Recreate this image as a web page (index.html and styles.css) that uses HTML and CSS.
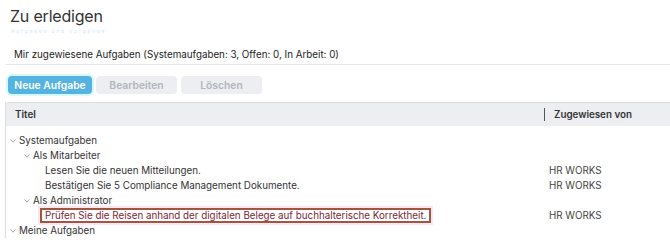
FILE: index.html
```html
<!DOCTYPE html>
<html lang="de">
<head>
<meta charset="utf-8">
<link rel="stylesheet" href="styles.css">
</head>
<body>
<div class="page">
  <h1 class="title">Zu erledigen</h1>
  <div class="ghost">Aufgaben und Vorgänge</div>
  <div class="summary">Mir zugewiesene Aufgaben (Systemaufgaben: 3, Offen: 0, In Arbeit: 0)</div>
  <div class="toolbar">
    <button class="btn btn-primary">Neue Aufgabe</button>
    <button class="btn btn-disabled">Bearbeiten</button>
    <button class="btn btn-disabled">Löschen</button>
  </div>
  <div class="table">
    <div class="thead">
      <div class="col-title">Titel</div>
      <div class="col-from"><span class="sep"></span>Zugewiesen von</div>
    </div>
    <div class="tbody">
      <div class="row l0"><svg class="chev" viewBox="0 0 6 4"><polyline points="0.5,0.5 3,3.2 5.5,0.5"/></svg><span class="cell">Systemaufgaben</span></div>
      <div class="row l1"><svg class="chev" viewBox="0 0 6 4"><polyline points="0.5,0.5 3,3.2 5.5,0.5"/></svg><span class="cell">Als Mitarbeiter</span></div>
      <div class="row l2"><span class="cell">Lesen Sie die neuen Mitteilungen.</span><span class="from">HR WORKS</span></div>
      <div class="row l2"><span class="cell">Bestätigen Sie 5 Compliance Management Dokumente.</span><span class="from">HR WORKS</span></div>
      <div class="row l1"><svg class="chev" viewBox="0 0 6 4"><polyline points="0.5,0.5 3,3.2 5.5,0.5"/></svg><span class="cell">Als Administrator</span></div>
      <div class="row hl"><span class="cell mark">Prüfen Sie die Reisen anhand der digitalen Belege auf buchhalterische Korrektheit.</span><span class="from">HR WORKS</span></div>
      <div class="row l0"><svg class="chev" viewBox="0 0 6 4"><polyline points="0.5,0.5 3,3.2 5.5,0.5"/></svg><span class="cell">Meine Aufgaben</span></div>
    </div>
  </div>
</div>
</body>
</html>
```
FILE: styles.css
```css
* { box-sizing: border-box; }
html, body { margin: 0; padding: 0; background: #fff; }
body { font-family: Inter, "Noto Sans", sans-serif; color: #333; width: 670px; height: 240px; overflow: hidden; }
.page { padding: 0 0 0 5px; }
.title { margin: 0; padding: 5px 0 0 5px; font-size: 16px; font-weight: 400; line-height: 22px; color: #333; letter-spacing: -0.2px; }
.ghost { padding-left: 6px; font-size: 5px; line-height: 8px; color: #cfe6ff; letter-spacing: 1.8px; }
.summary { margin-top: 13px; padding: 0 0 2px 9px; font-size: 9.8px; line-height: 14px; color: #222; border-bottom: 1px solid #e6e7ea; }
.toolbar { display: flex; gap: 4px; padding: 11px 0 0 3px; }
.btn { font-family: Inter, sans-serif; font-size: 10.3px; font-weight: 600; height: 18px; border: none; border-radius: 4px; padding: 0; width: 81px; }
.btn-primary { width: 84px; background: #55b3e2; color: #fff; box-shadow: 0 0 0 2px #d6f8fc; }
.btn-disabled { background: #eceef2; color: #b3b6bd; }
.table { margin-top: 8px; border-left: 1px solid #dcdde1; }
.thead { display: flex; height: 24px; align-items: center; background: #edeef2; border-top: 1px solid #dcdde1; border-top-left-radius: 3px; font-size: 9.8px; font-weight: 600; color: #333; }
.col-title { flex: 1; padding-left: 9px; }
.col-from { width: 126px; display: flex; align-items: center; }
.sep { width: 1px; height: 13px; background: #555; margin-right: 9px; }
.tbody { padding-top: 7px; }
.row { display: flex; align-items: center; height: 15px; font-size: 9.8px; color: #333; position: relative; }
.cell { flex: none; }
.from { position: absolute; left: 543px; font-size: 9.8px; color: #444; }
.chev { width: 6px; height: 4px; margin-right: 3px; margin-top: 1px; fill: none; stroke: #9a9a9a; stroke-width: 0.9; }
.l0 { padding-left: 4px; }
.l1 { padding-left: 18px; }
.l2 { padding-left: 39px; }
.hl { padding-left: 34px; }
.hl .mark { background: #fff; color: #7a1f35; border: 2px solid #a2563f; padding: 0 3px; line-height: 11px; box-shadow: 0 0 0 2px #fde6f4; }
```
